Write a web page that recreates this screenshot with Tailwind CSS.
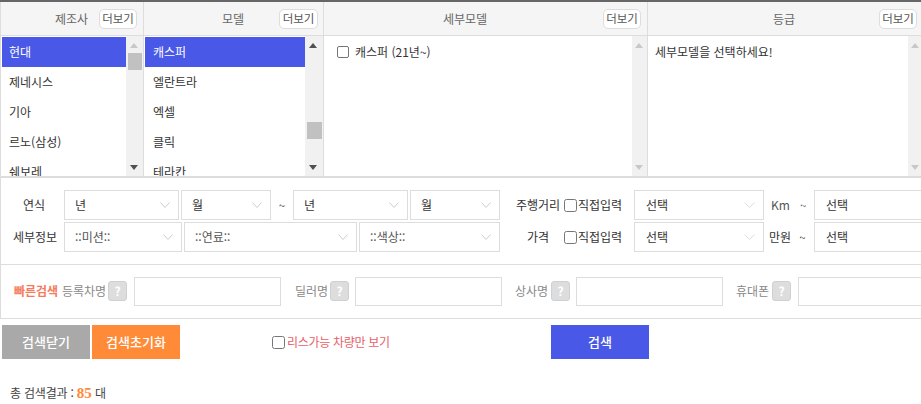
<!DOCTYPE html>
<html lang="ko">
<head>
    <meta charset="UTF-8">
    <title>차량 검색</title>
    <script src="https://cdn.jsdelivr.net/npm/@tailwindcss/browser@4"></script>
</head>
<body class="bg-white">
<div class="w-[921px] h-[404px] overflow-hidden text-[12px] text-[#333] font-['Noto_Sans_CJK_KR','Noto_Sans',sans-serif]">
    <div class="h-[2px] bg-[#666]"></div>

    <!-- column headers -->
    <div class="flex h-[34px] bg-[#f5f5f5] border-b border-[#ddd] border-l border-l-[#ddd] text-[#666]">
        <div class="w-[143px] shrink-0 border-r border-[#ddd] flex items-center pl-[54px] pr-[6px] justify-between">
            <span>제조사</span>
            <span class="w-[38px] h-[20px] bg-white border border-[#ddd] rounded-[5px] flex items-center justify-center text-[#555] text-[11.5px]">더보기</span>
        </div>
        <div class="w-[180px] shrink-0 border-r border-[#ddd] flex items-center pl-[78px] pr-[5px] justify-between">
            <span>모델</span>
            <span class="w-[39px] h-[20px] bg-white border border-[#ddd] rounded-[5px] flex items-center justify-center text-[#555] text-[11.5px]">더보기</span>
        </div>
        <div class="w-[324px] shrink-0 border-r border-[#ddd] flex items-center pl-[119px] pr-[6px] justify-between">
            <span>세부모델</span>
            <span class="w-[38px] h-[20px] bg-white border border-[#ddd] rounded-[5px] flex items-center justify-center text-[#555] text-[11.5px]">더보기</span>
        </div>
        <div class="flex-1 flex items-center pl-[125px] pr-[4px] justify-between">
            <span>등급</span>
            <span class="w-[38px] h-[20px] bg-white border border-[#ddd] rounded-[5px] flex items-center justify-center text-[#555] text-[11.5px]">더보기</span>
        </div>
    </div>

    <!-- lists -->
    <div class="flex h-[142px] border-b-2 border-[#ddd] border-l border-l-[#ddd] overflow-hidden">
        <div class="w-[143px] shrink-0 border-r border-[#ddd] flex">
            <ul class="w-[125px] pl-[1px] pt-[1px]">
                <li class="h-[30px] bg-[#4a58e8] text-white flex items-center pl-[7px]">현대</li>
                <li class="h-[30px] flex items-center pl-[7px]">제네시스</li>
                <li class="h-[30px] flex items-center pl-[7px]">기아</li>
                <li class="h-[30px] flex items-center pl-[7px]">르노(삼성)</li>
                <li class="h-[30px] flex items-center pl-[7px]">쉐보레</li>
            </ul>
            <div class="relative flex-1 bg-[#f1f1f1]">
                <svg class="absolute left-[4px] top-[7px]" width="8" height="5"><path d="M4 0L8 5H0Z" fill="#c8c8c8"/></svg>
                <div class="absolute left-[2px] right-[1px] top-[17px] h-[17px] bg-[#c1c1c1]"></div>
                <svg class="absolute left-[4px] bottom-[6px]" width="8" height="5"><path d="M0 0H8L4 5Z" fill="#505050"/></svg>
            </div>
        </div>
        <div class="w-[180px] shrink-0 border-r border-[#ddd] flex">
            <ul class="w-[161px] pl-[1px] pt-[1px]">
                <li class="h-[30px] bg-[#4a58e8] text-white flex items-center pl-[8px]">캐스퍼</li>
                <li class="h-[30px] flex items-center pl-[8px]">엘란트라</li>
                <li class="h-[30px] flex items-center pl-[8px]">엑셀</li>
                <li class="h-[30px] flex items-center pl-[8px]">클릭</li>
                <li class="h-[30px] flex items-center pl-[8px]">테라칸</li>
            </ul>
            <div class="relative flex-1 bg-[#f1f1f1]">
                <svg class="absolute left-[4px] top-[7px]" width="8" height="5"><path d="M4 0L8 5H0Z" fill="#505050"/></svg>
                <div class="absolute left-[2px] right-[1px] top-[86px] h-[17px] bg-[#c1c1c1]"></div>
                <svg class="absolute left-[4px] bottom-[6px]" width="8" height="5"><path d="M0 0H8L4 5Z" fill="#505050"/></svg>
            </div>
        </div>
        <div class="w-[324px] shrink-0 border-r border-[#ddd] flex">
            <div class="flex-1 flex items-start pl-[13px] pt-[9px] gap-[6px]">
                <input type="checkbox" class="appearance-none w-[12px] h-[12px] mt-[1px] border border-[#767676] rounded-[2px] bg-white">
                <span class="leading-[14px]">캐스퍼 (21년~)</span>
            </div>
            <div class="relative w-[15px] bg-[#f1f1f1]">
                <svg class="absolute left-[3px] top-[7px]" width="8" height="5"><path d="M4 0L8 5H0Z" fill="#c8c8c8"/></svg>
                <svg class="absolute left-[3px] bottom-[6px]" width="8" height="5"><path d="M0 0H8L4 5Z" fill="#c8c8c8"/></svg>
            </div>
        </div>
        <div class="flex-1 flex">
            <div class="flex-1 pl-[7px] pt-[9px] leading-[14px]">세부모델을 선택하세요!</div>
            <div class="relative w-[13px] bg-[#f1f1f1]">
                <svg class="absolute left-[3px] top-[7px]" width="8" height="5"><path d="M4 0L8 5H0Z" fill="#c8c8c8"/></svg>
                <svg class="absolute left-[3px] bottom-[6px]" width="8" height="5"><path d="M0 0H8L4 5Z" fill="#c8c8c8"/></svg>
            </div>
        </div>
    </div>

    <!-- filters -->
    <div class="h-[87px] border-b border-[#ddd] border-l border-l-[#ddd] pt-[12px]">
        <div class="flex items-center h-[30px]">
            <span class="w-[63px] shrink-0 pl-[22px]">연식</span>
            <div class="w-[115px] shrink-0 h-[30px] border border-[#ddd] flex items-center justify-between pl-[10px] pr-[8px]"><span>년</span><svg width="10" height="6" fill="none" stroke="#ccc"><path d="M.5.5l4.5 5 4.5-5"/></svg></div>
            <div class="w-[90px] shrink-0 ml-[2px] h-[30px] border border-[#ddd] flex items-center justify-between pl-[10px] pr-[8px]"><span>월</span><svg width="10" height="6" fill="none" stroke="#ccc"><path d="M.5.5l4.5 5 4.5-5"/></svg></div>
            <span class="w-[22px] shrink-0 text-center text-[11px]">~</span>
            <div class="w-[115px] shrink-0 h-[30px] border border-[#ddd] flex items-center justify-between pl-[10px] pr-[8px]"><span>년</span><svg width="10" height="6" fill="none" stroke="#ccc"><path d="M.5.5l4.5 5 4.5-5"/></svg></div>
            <div class="w-[90px] shrink-0 ml-[2px] h-[30px] border border-[#ddd] flex items-center justify-between pl-[10px] pr-[8px]"><span>월</span><svg width="10" height="6" fill="none" stroke="#ccc"><path d="M.5.5l4.5 5 4.5-5"/></svg></div>
            <span class="w-[48px] shrink-0 ml-[16px] whitespace-nowrap">주행거리</span>
            <input type="checkbox" class="appearance-none shrink-0 w-[13px] h-[13px] border border-[#767676] rounded-[2.5px] bg-white">
            <span class="w-[44px] shrink-0 ml-[1px] whitespace-nowrap">직접입력</span>
            <div class="w-[130px] ml-[12px] h-[30px] border border-[#ddd] flex items-center justify-between pl-[11px] pr-[8px] shrink-0"><span>선택</span><svg width="11" height="6" fill="none" stroke="#ddd"><path d="M.5.5l5 5 5-5"/></svg></div>
            <span class="w-[50px] pl-[7px] whitespace-nowrap shrink-0 text-[#555]">Km <span class="ml-[7px] text-[11px]">~</span></span>
            <div class="w-[130px] h-[30px] border border-[#ddd] flex items-center pl-[11px] shrink-0"><span>선택</span></div>
        </div>
        <div class="flex items-center h-[30px] mt-[2px]">
            <span class="w-[63px] shrink-0 pl-[12px] whitespace-nowrap">세부정보</span>
            <div class="w-[118px] shrink-0 h-[30px] border border-[#ddd] flex items-center justify-between pl-[10px] pr-[8px] text-[#555]"><span>::미션::</span><svg width="10" height="6" fill="none" stroke="#ccc"><path d="M.5.5l4.5 5 4.5-5"/></svg></div>
            <div class="w-[173px] shrink-0 ml-[2px] h-[30px] border border-[#ddd] flex items-center justify-between pl-[10px] pr-[8px] text-[#555]"><span>::연료::</span><svg width="10" height="6" fill="none" stroke="#ccc"><path d="M.5.5l4.5 5 4.5-5"/></svg></div>
            <div class="w-[141px] shrink-0 ml-[2px] h-[30px] border border-[#ddd] flex items-center justify-between pl-[10px] pr-[8px] text-[#555]"><span>::색상::</span><svg width="10" height="6" fill="none" stroke="#ccc"><path d="M.5.5l4.5 5 4.5-5"/></svg></div>
            <span class="w-[37px] shrink-0 ml-[27px] whitespace-nowrap">가격</span>
            <input type="checkbox" class="appearance-none shrink-0 w-[13px] h-[13px] border border-[#767676] rounded-[2.5px] bg-white">
            <span class="w-[44px] shrink-0 ml-[1px] whitespace-nowrap">직접입력</span>
            <div class="w-[130px] ml-[12px] h-[30px] border border-[#ddd] flex items-center justify-between pl-[11px] pr-[8px] shrink-0"><span>선택</span><svg width="11" height="6" fill="none" stroke="#ddd"><path d="M.5.5l5 5 5-5"/></svg></div>
            <span class="w-[50px] pl-[5px] whitespace-nowrap shrink-0">만원 <span class="ml-[5px] text-[11px]">~</span></span>
            <div class="w-[130px] h-[30px] border border-[#ddd] flex items-center pl-[11px] shrink-0"><span>선택</span></div>
        </div>
    </div>

    <!-- quick search -->
    <div class="h-[54px] border-b border-[#ddd] border-l border-l-[#ddd] flex items-center pl-[13px] pb-[1px] text-[#888]">
        <span class="w-[44px] shrink-0 text-[#f47a5a] font-bold whitespace-nowrap">빠른검색</span>
        <span class="w-[43px] shrink-0 ml-[4px] whitespace-nowrap">등록차명</span>
        <span class="w-[19px] h-[20px] ml-[3px] bg-[#ddd] border border-[#d0d0d0] rounded-[3px] text-white font-bold flex items-center justify-center shrink-0">?</span>
        <div class="w-[147px] h-[29px] ml-[7px] border border-[#ddd] shrink-0"></div>
        <span class="w-[32px] shrink-0 ml-[14px] whitespace-nowrap">딜러명</span>
        <span class="w-[19px] h-[20px] ml-[3px] bg-[#ddd] border border-[#d0d0d0] rounded-[3px] text-white font-bold flex items-center justify-center shrink-0">?</span>
        <div class="w-[147px] h-[29px] ml-[6px] border border-[#ddd] shrink-0"></div>
        <span class="w-[33px] shrink-0 ml-[13px] whitespace-nowrap">상사명</span>
        <span class="w-[19px] h-[20px] ml-[3px] bg-[#ddd] border border-[#d0d0d0] rounded-[3px] text-white font-bold flex items-center justify-center shrink-0">?</span>
        <div class="w-[147px] h-[29px] ml-[6px] border border-[#ddd] shrink-0"></div>
        <span class="w-[33px] shrink-0 ml-[13px] whitespace-nowrap">휴대폰</span>
        <span class="w-[19px] h-[20px] ml-[3px] bg-[#ddd] border border-[#d0d0d0] rounded-[3px] text-white font-bold flex items-center justify-center shrink-0">?</span>
        <div class="w-[147px] h-[29px] ml-[7px] border border-[#ddd] shrink-0"></div>
    </div>

    <!-- buttons -->
    <div class="flex items-center h-[34px] mt-[6px] pl-[2px]">
        <button class="w-[88px] h-[34px] bg-[#a9a9a9] text-white text-[13px] font-medium">검색닫기</button>
        <button class="w-[88px] h-[34px] ml-[2px] bg-[#ff8b38] text-white text-[13px] font-medium">검색초기화</button>
        <input type="checkbox" class="appearance-none ml-[92px] w-[13px] h-[13px] border border-[#767676] rounded-[2.5px] bg-white">
        <span class="ml-[2px] w-[264px] text-[#e8606a] whitespace-nowrap tracking-[-0.3px]">리스가능 차량만 보기</span>
        <button class="w-[98px] h-[34px] bg-[#4a58e8] text-white text-[13px] font-medium">검색</button>
    </div>

    <p class="mt-[25px] ml-[10px] leading-[18px] text-[#444] tracking-[-0.2px]">총 검색결과 : <b class="text-[#ff8b38] text-[15px] tracking-normal font-['Liberation_Serif',serif]">85</b> 대</p>
</div>
</body>
</html>
